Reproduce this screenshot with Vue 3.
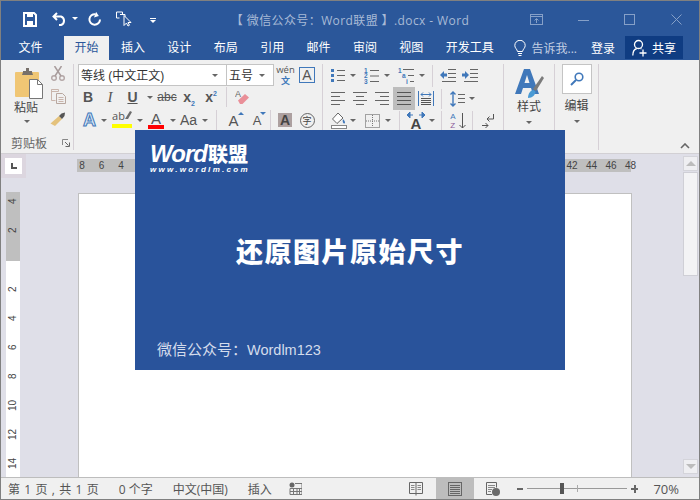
<template>
  <div class="window">
    <!-- title bar -->
    <header class="titlebar">
      <div class="quick">
        <svg class="q-save" width="14" height="15" viewBox="0 0 14 15"><path d="M1 1h10l2 2v11H1z" fill="none" stroke="#fff" stroke-width="2"/><rect x="4" y="1" width="6" height="4" fill="#fff"/><rect x="4" y="9" width="6" height="5" fill="#fff"/></svg>
        <svg class="q-undo" width="15" height="14" viewBox="0 0 15 14"><path d="M5 1 1.500 4.500 5 8M2 4.500h7a4.500 4.500 0 0 1 0 8.500H7" fill="none" stroke="#fff" stroke-width="2"/></svg>
        <i class="caret white q-caret"></i>
        <svg class="q-redo" width="13" height="14" viewBox="0 0 13 14"><path d="M7.500 2.200A5.300 5.300 0 1 0 12 7.500" fill="none" stroke="#fff" stroke-width="2"/><path d="M7 0v6l4-3z" fill="#fff" transform="rotate(20 8 3)"/></svg>
        <svg class="q-touch" width="16" height="16" viewBox="0 0 16 16"><path d="M.5 1h6v2M.5 1v6h3" fill="none" stroke="#fff"/><path d="M4 3.500h5V8" fill="none" stroke="#fff"/><path d="M8 4.500v10l2.500-2.500 1.500 3 1.500-.8-1.500-2.700h3z" fill="#2b579a" stroke="#fff"/></svg>
        <span class="q-more"><b></b><i class="caret white"></i></span>
      </div>
      <div class="doc-title">【 微信公众号：Word联盟 】.docx - Word</div>
      <div class="controls">
        <svg width="13" height="11" viewBox="0 0 13 11"><rect x=".5" y=".5" width="12" height="10" fill="none" stroke="#86a0c8"/><path d="M.5 2.500h12M6.500 9V5M4.500 6.500l2-2 2 2" fill="none" stroke="#86a0c8"/></svg>
        <svg class="c-min" width="11" height="11" viewBox="0 0 11 11"><path d="M0 6.500h11" stroke="#86a0c8"/></svg>
        <svg class="c-max" width="11" height="11" viewBox="0 0 11 11"><rect x=".5" y=".5" width="10" height="10" fill="none" stroke="#86a0c8"/></svg>
        <svg class="c-close" width="11" height="11" viewBox="0 0 11 11"><path d="M.5.500l10 10M10.500.500l-10 10" stroke="#86a0c8"/></svg>
      </div>
    </header>

    <!-- tabs -->
    <nav class="tabs">
      <span class="tab file">文件</span>
      <span v-for="t in tabs" :key="t" class="tab" :class="{ active: t === '开始' }">{{ t }}</span>
      <div class="tabs-right">
        <svg width="12" height="17" viewBox="0 0 12 17"><path d="M3.500 11.500C3 9 .8 8 .8 5.500a5.200 5.200 0 0 1 10.400 0c0 2.500-2.200 3.500-2.700 6z" fill="none" stroke="#fff"/><path d="M4 13.500h4M4.500 15.500h3" stroke="#fff"/></svg>
        <span class="tell">告诉我...</span>
        <span class="login">登录</span>
        <span class="share">
          <svg width="15" height="18" viewBox="0 0 15 18"><circle cx="6.500" cy="5.500" r="4" fill="none" stroke="#fff" stroke-width="1.300"/><path d="M.8 16.500c0-4 2-6.500 4-7M8.500 9.500l1 .5" fill="none" stroke="#fff" stroke-width="1.300"/><path d="M11 10.500v7M7.500 14h7" stroke="#fff" stroke-width="1.300"/></svg>
          共享
        </span>
      </div>
    </nav>

    <!-- ribbon -->
    <section class="ribbon">
      <div class="group clip">
        <div class="clip-body">
          <div class="paste">
            <svg width="28" height="31" viewBox="0 0 28 31"><rect x="0" y="4" width="24" height="25" rx="1" fill="#f0c674"/><path d="M8 4V3h3V0h3v3h3v1l1 3H7z" fill="#77706a"/><path d="M14.500 11.500h8l5 5v14h-13z" fill="#fff" stroke="#777"/><path d="M22.500 11.500v5h5" fill="none" stroke="#777"/></svg>
            <span class="big-label">粘贴</span>
            <i class="caret"></i>
          </div>
          <div class="clip-tools">
            <svg width="14" height="15" viewBox="0 0 14 15"><circle cx="3" cy="12" r="2.300" fill="none" stroke="#b3a6a6" stroke-width="1.400"/><circle cx="11" cy="12" r="2.300" fill="none" stroke="#b3a6a6" stroke-width="1.400"/><path d="M4 10 10.500 0M10 10 3.500 0" stroke="#a89c9c" stroke-width="1.500"/></svg>
            <svg width="15" height="15" viewBox="0 0 15 15"><path d="M.5.500h7v2h-7zM.5.500v11h4" fill="none" stroke="#c9b5ac"/><path d="M5.500 4.500h6l3 3v7h-9z" fill="none" stroke="#b8a79f"/><path d="M7.500 8.500h5M7.500 10.500h5M7.500 12.500h5" stroke="#c9b5ac"/></svg>
            <svg width="16" height="15" viewBox="0 0 16 15"><path d="M9 4 12 7 5 14 .5 11.500z" fill="#e4c27c"/><path d="M9 4 11.500 1.500 15 .5 14.500 4 12 7z" fill="#555"/></svg>
          </div>
        </div>
        <div class="group-label">
          <span>剪贴板</span>
          <svg width="8" height="8" viewBox="0 0 8 8"><path d="M.5 6V.5H6" fill="none" stroke="#888"/><path d="M3 3l3.500 3.500M7.500 3.500v4h-4" fill="none" stroke="#666"/></svg>
        </div>
      </div>

      <div class="group font">
        <div class="row font-r1">
          <div class="combo"><span>等线 (中文正文)</span><i class="caret"></i></div>
          <div class="combo size"><span>五号</span><i class="caret"></i></div>
          <div class="pinyin"><span>wén</span><em>文</em></div>
          <div class="a-box">A</div>
        </div>
        <div class="row font-r2">
          <b class="glyph">B</b>
          <span class="glyph italic">I</span>
          <b class="glyph under">U</b>
          <i class="caret"></i>
          <s class="glyph abc">abc</s>
          <b class="glyph">x<sub>2</sub></b>
          <b class="glyph">x<sup>2</sup></b>
          <i class="vsep"></i>
          <svg width="15" height="16" viewBox="0 0 15 16"><text x="0" y="8" font-size="9" fill="#666" font-family="Liberation Sans">A</text><path d="M3 11.500 10 5l4 3.500-6.500 6.500H5z" fill="#e98f98"/></svg>
        </div>
        <div class="row font-r3">
          <span class="a-effect">A</span>
          <i class="caret"></i>
          <span class="a-mark"><span>ab</span><svg width="8" height="10" viewBox="0 0 8 10"><path d="M1 9 6 1l2 1-4 7z" fill="#6d6d6d"/></svg><u class="yellow"></u></span>
          <i class="caret"></i>
          <span class="a-color">A<u class="red"></u></span>
          <i class="caret"></i>
          <span class="aa">Aa</span>
          <i class="caret"></i>
          <i class="vsep end"></i>
          <span class="a-grow">A<i class="up"></i></span>
          <span class="a-grow small">A<i class="down"></i></span>
          <i class="vsep"></i>
          <span class="a-shade">A</span>
          <span class="a-circle">字</span>
        </div>
      </div>

      <div class="group para">
        <div class="row para-r1 inset">
          <svg width="14" height="15" viewBox="0 0 14 15"><path d="M0 1h3v3H0zM0 6h3v3H0zM0 11h3v3H0z" fill="#4078ba"/><path d="M6 2.500h8M6 7.500h8M6 12.500h8" stroke="#666"/></svg>
          <i class="caret"></i>
          <svg width="15" height="17" viewBox="0 0 15 17"><g fill="#4078ba" font-size="6.500" font-weight="bold" font-family="Liberation Sans"><text x="0" y="5.500">1</text><text x="0" y="11">2</text><text x="0" y="16.500">3</text></g><path d="M6 3.500h9M6 9h9M6 14.500h9" stroke="#666"/></svg>
          <i class="caret"></i>
          <svg width="16" height="17" viewBox="0 0 16 17"><g fill="#4078ba" font-size="6.500" font-weight="bold" font-family="Liberation Sans"><text x="0" y="5.500">1</text><text x="4" y="11">a</text><text x="8" y="16.500">i</text></g><path d="M5 2.500h11M10 8.500h6M12 14.500h4" stroke="#666"/></svg>
          <i class="caret"></i>
          <i class="vsep tall"></i>
          <svg width="16" height="13" viewBox="0 0 16 13"><path d="M8 .5h8M8 4.500h8M8 8.500h8M2 12.500h14" stroke="#666"/><path d="M0 6l4-4v2.500h3v3H4V10z" fill="#4078ba"/></svg>
          <svg width="16" height="13" viewBox="0 0 16 13"><path d="M8 .5h8M8 4.500h8M8 8.500h8M2 12.500h14" stroke="#666"/><path d="M7 6 3 2v2.500H0v3h3V10z" fill="#4078ba"/></svg>
        </div>
        <div class="row para-r2">
          <svg width="14" height="13" viewBox="0 0 14 13"><path d="M0 .5h14M0 4.500h9M0 8.500h14M0 12.500h9" stroke="#666"/></svg>
          <svg width="14" height="13" viewBox="0 0 14 13"><path d="M0 .5h14M3 4.500h8M0 8.500h14M3 12.500h8" stroke="#666"/></svg>
          <svg width="14" height="13" viewBox="0 0 14 13"><path d="M0 .5h14M5 4.500h9M0 8.500h14M5 12.500h9" stroke="#666"/></svg>
          <span class="active-tool"><svg width="14" height="13" viewBox="0 0 14 13"><path d="M0 .5h14M0 4.500h14M0 8.500h14M0 12.500h14" stroke="#555"/></svg></span>
          <svg width="16" height="15" viewBox="0 0 16 15"><path d="M.5 0v15M15.500 0v15" stroke="#4078ba"/><path d="M3 3.500h10M3 3.500l2-2M3 3.500l2 2M13 3.500l-2-2M13 3.500l-2 2" fill="none" stroke="#4078ba"/><path d="M3 7.500h10M3 9.500h10M3 11.500h10M3 13.500h10" stroke="#555"/></svg>
          <i class="vsep"></i>
          <svg width="15" height="16" viewBox="0 0 15 16"><path d="M3 1v14M.5 3.500 3 1l2.500 2.500M.5 12.500 3 15l2.500-2.500" fill="none" stroke="#4078ba" stroke-width="1.400"/><path d="M8 3.500h7M8 7.500h7M8 11.500h7" stroke="#666"/></svg>
          <i class="caret"></i>
        </div>
        <div class="row para-r3 inset">
          <svg width="16" height="17" viewBox="0 0 16 17"><path d="M7 1 1.500 7 6 11.500l6-5.500z" fill="#fff" stroke="#666"/><path d="M12 7c2 2 2.500 4 1.500 4.500S11 10 12 7z" fill="#4078ba"/><rect x=".5" y="13.500" width="15" height="3" fill="#fff" stroke="#888"/></svg>
          <i class="caret"></i>
          <svg width="15" height="14" viewBox="0 0 15 14"><rect x=".5" y=".5" width="14" height="13" fill="none" stroke="#555" stroke-dasharray="1 1"/><path d="M7.500 1v12M1 7h13" stroke="#777" stroke-dasharray="1 1"/></svg>
          <i class="caret"></i>
          <i class="vsep"></i>
          <span class="text-dir"><svg width="18" height="6" viewBox="0 0 18 6"><path d="M0 3l3-3v6zM18 3l-3-3v6zM3 3h3M12 3h3" fill="#4078ba" stroke="#4078ba"/></svg><span>A</span></span>
          <i class="caret"></i>
          <i class="vsep"></i>
          <span class="sort"><span class="az"><em>A</em><strong>Z</strong></span><svg width="7" height="16" viewBox="0 0 7 16"><path d="M3.500 0v15M.5 12l3 3 3-3" fill="none" stroke="#555"/></svg></span>
          <i class="vsep"></i>
          <svg width="12" height="16" viewBox="0 0 12 16"><path d="M11.500 1v5H5M5 6l2.500-2.500M5 6l2.500 2.500" fill="none" stroke="#555"/><path d="M0 12.500h6" stroke="#555"/><path d="M3.500 10 6 12.500 3.500 15" fill="none" stroke="#555"/></svg>
        </div>
      </div>

      <div class="group big">
        <svg width="29" height="31" viewBox="0 0 29 31"><path d="M0 26 9 1h6l9 25h-6l-2-6H8l-2 6zM9.500 15h5L12 7z" fill="#4078ba"/><path d="M18 21 27 8l2 2-8 13z" fill="#7b7b7b"/><path d="M13 30c0-5 3-8 5.500-8l2 1.500c0 3-3 6.500-7.500 6.500z" fill="#4a9ad4"/></svg>
        <span class="big-label">样式</span>
        <i class="caret"></i>
      </div>

      <div class="group big edit">
        <span class="find">
          <svg width="14" height="14" viewBox="0 0 14 14"><circle cx="9" cy="5" r="3.800" fill="none" stroke="#4078ba" stroke-width="1.600"/><path d="M6 8 1 13" stroke="#4078ba" stroke-width="2"/></svg>
        </span>
        <span class="big-label">编辑</span>
        <i class="caret"></i>
      </div>

      <svg class="collapse" width="10" height="6" viewBox="0 0 10 6"><path d="M1 5l4-4 4 4" fill="none" stroke="#666" stroke-width="1.600"/></svg>
    </section>

    <!-- document area -->
    <main class="workspace">
      <div class="rail">
        <div class="corner"><span><svg width="6" height="6" viewBox="0 0 6 6"><path d="M0 0h2v4h4v2H0z" fill="#555"/></svg></span></div>
        <div class="v-ruler">
          <div class="v-grey"><span>4</span><span>2</span></div>
          <div class="v-white"><span v-for="n in vNums" :key="n">{{ n }}</span></div>
        </div>
      </div>
      <div class="center">
        <div class="h-ruler">
          <div class="h-nums"><span>8</span><span>6</span><span>4</span></div>
          <div class="h-nums right"><span>42</span><span>44</span><span>46</span><span>48</span></div>
        </div>
        <div class="page"></div>
      </div>
      <aside class="scrollbar">
        <div class="sb-btn"><i class="tri up"></i></div>
        <div class="sb-thumb"></div>
        <div class="sb-btn bottom"><i class="tri"></i></div>
      </aside>
    </main>

    <!-- status bar -->
    <footer class="statusbar">
      <span class="pages">第 1 页 , 共 1 页</span>
      <span>0 个字</span>
      <span>中文(中国)</span>
      <span>插入</span>
      <svg class="macro" width="13" height="13" viewBox="0 0 13 13"><circle cx="3" cy="3" r="2.500" fill="#666"/><path d="M6 1.500h7v11H1V6.500h12M1 9.500h12M4.500 6.500v6M8 6.500v6M10.500 6.500v6" fill="none" stroke="#777"/></svg>
      <div class="status-right">
        <svg width="14" height="14" viewBox="0 0 14 14"><path d="M.5.500h13v11h-13zM7 .5v13" fill="none" stroke="#666"/><path d="M2 3.500h3.500M2 5.500h3.500M2 7.500h3.500M8.500 3.500H12M8.500 5.500H12M8.500 7.500H12" stroke="#888"/></svg>
        <span class="view-active"><svg width="14" height="14" viewBox="0 0 14 14"><rect x=".5" y=".5" width="13" height="13" fill="none" stroke="#666"/><path d="M2 3.500h10M2 5.500h10M2 7.500h10M2 9.500h10M2 11.500h10" stroke="#666"/></svg></span>
        <svg class="view-web" width="14" height="14" viewBox="0 0 14 14"><path d="M6 12.500H.5V.5h10v5" fill="none" stroke="#666"/><path d="M2 3.500h7M2 5.500h7M2 7.500h4M2 9.500h3" stroke="#888"/><circle cx="10" cy="10" r="4" fill="#6b6b6b"/></svg>
        <span class="zoom-minus"></span>
        <div class="slider"><i class="tick"></i><i class="thumb"></i></div>
        <span class="zoom-plus"></span>
        <span class="zoom-val">70%</span>
      </div>
    </footer>

    <!-- article banner sits over the window -->
    <div class="banner">
      <div class="logo">
        <div class="logo-name"><em>Word</em><b>联盟</b></div>
        <div class="logo-url">www.wordlm.com</div>
      </div>
      <h1>还原图片原始尺寸</h1>
      <p>微信公众号：<span>Wordlm123</span></p>
    </div>
  </div>
</template>

<script setup>
const tabs = ['开始', '插入', '设计', '布局', '引用', '邮件', '审阅', '视图', '开发工具']
const vNums = [2, 4, 6, 8, 10, 12, 14]
</script>

<style>
html, body { margin: 0; overflow: hidden; }
</style>

<style scoped>
.window {
  position: relative;
  width: 700px;
  height: 500px;
  box-sizing: border-box;
  border: 1px solid #808080;
  background: #f0f0f0;
  font-family: "Open Sans", "Noto Sans CJK SC", sans-serif;
  font-size: 12px;
  color: #444;
  overflow: hidden;
  display: flex;
  flex-direction: column;
}

.caret {
  display: block;
  width: 0;
  height: 0;
  border-left: 3px solid transparent;
  border-right: 3px solid transparent;
  border-top: 3px solid #666;
}
.caret.white { border-top-color: #fff; }

/* title bar */
.titlebar {
  height: 35px;
  flex: none;
  background: #2b579a;
  display: grid;
  grid-template-columns: 1fr auto 1fr;
  align-items: center;
}
.quick { display: flex; align-items: center; padding-left: 22px; }
.q-save { margin-top: 1px; }
.q-undo { margin-left: 15px; }
.q-caret { margin-left: 5px; }
.q-redo { margin-left: 10px; }
.q-touch { margin-left: 15px; }
.q-more { margin-left: 18px; display: flex; flex-direction: column; gap: 1px; margin-top: 3px; }
.q-more b { display: block; width: 6px; height: 1px; background: #fff; }
.doc-title { color: #a8bad6; font-size: 12px; letter-spacing: .4px; padding-top: 2px; }
.controls { display: flex; align-items: center; justify-content: flex-end; padding-right: 17px; padding-top: 1px; }
.c-min { margin-left: 35px; }
.c-max { margin-left: 35px; }
.c-close { margin-left: 36px; }

/* tabs */
.tabs {
  height: 24px;
  flex: none;
  background: #2b579a;
  display: flex;
  align-items: stretch;
  color: #fff;
  gap: 1.400px;
}
.tab { padding: 0 10.500px; line-height: 24px; }
.tab.file { margin-left: 7px; margin-right: 9.600px; }
.tab.active { background: #f0f0f0; color: #2b579a; }
.tabs-right { margin-left: auto; display: flex; align-items: center; padding-right: 16px; }
.tabs-right > svg { margin-left: -1px; margin-right: 1px; }
.tell { color: #c3cfe3; margin-left: 5px; }
.login { margin-left: 14px; }
.share {
  margin-left: 10px;
  height: 23px;
  align-self: flex-start;
  width: 58px;
  box-sizing: border-box;
  padding-left: 7px;
  background: #0f3c82;
  display: flex;
  align-items: center;
  gap: 5px;
}

/* ribbon */
.ribbon {
  position: relative;
  height: 93px;
  flex: none;
  display: flex;
  align-items: flex-start;
  box-sizing: content-box;
  border-bottom: 1px solid #d2d0d4;
  background: #f0f0f0;
}
.group {
  height: 86px;
  margin-top: 4px;
  box-sizing: border-box;
  border-right: 1px solid #d6d0d6;
  flex: none;
}
.big-label { font-size: 12px; color: #444; line-height: 14px; }

.clip { width: 73px; display: flex; flex-direction: column; }
.clip-body { display: flex; height: 72px; }
.paste { width: 49px; display: flex; flex-direction: column; align-items: center; padding: 4px 0 0 6px; box-sizing: border-box; }
.paste .big-label { margin-top: 2px; margin-right: 5px; }
.paste .caret { margin-top: 5px; margin-right: 3px; }
.clip-tools { display: flex; flex-direction: column; align-items: center; gap: 8px; padding-top: 2px; width: 16px; }
.group-label { display: flex; align-items: center; justify-content: space-between; padding: 0 3px 0 10px; height: 14px; color: #666; }

.row { display: grid; place-items: center; }
.font { width: 249px; padding-left: 4px; }
.font-r1 { height: 23px; grid-template-columns: 149px 47px 23px 20px; align-items: start; }
.font-r2 { height: 22px; margin-top: -1px; grid-template-columns: 20px 24px 21px 13px 22px 22px 22px 9px 22px; }
.font-r3 { height: 22px; margin-top: 1px; grid-template-columns: 23px 6px 30px 5px 28px 5px 27px 5px 10px 33px 14px 12px 18px 26px; }

.combo {
  justify-self: stretch;
  height: 22px;
  box-sizing: border-box;
  background: #fff;
  border: 1px solid #c4c4c4;
  display: flex;
  align-items: center;
  justify-content: space-between;
  padding: 0 8px 1px 2px;
  font-family: "Liberation Sans", "Noto Sans CJK SC", sans-serif;
  font-size: 12px;
  color: #333;
}
.combo.size { border-left: none; padding-left: 2px; }
.combo .caret { margin-top: 1px; }
.pinyin { display: flex; flex-direction: column; align-items: center; font-size: 9.500px; color: #555; }
.pinyin span { line-height: 11px; }
.pinyin em { font-style: normal; line-height: 11px; font-size: 9px; color: #4078ba; font-weight: bold; }
.a-box {
  width: 16px; height: 16px; box-sizing: border-box;
  border: 1px solid #4078ba; margin-top: 3px;
  font-family: "Liberation Sans", sans-serif; font-size: 14px; line-height: 14px;
  text-align: center; color: #555;
}

.glyph { font-family: "Liberation Sans", sans-serif; font-size: 14px; color: #555; line-height: 16px; }
.glyph.italic { font-family: "Liberation Serif", serif; font-style: italic; font-size: 15px; }
.glyph.under { text-decoration: underline; }
.glyph.abc { font-size: 12px; }
.glyph sub, .glyph sup { font-size: 7px; color: #4078ba; line-height: 0; }

.vsep { display: block; width: 1px; height: 20px; background: #d6d0d6; }
.vsep.end { justify-self: end; }
.vsep.tall { height: 22px; }

.a-effect {
  font-family: "Liberation Sans", sans-serif; font-weight: bold; font-size: 18px; line-height: 18px;
  color: #dce8f5; -webkit-text-stroke: 1px #3f78ba;
}
.a-mark { position: relative; display: flex; align-items: flex-start; height: 18px; font-size: 11px; line-height: 10px; color: #555; }
.a-mark svg { margin-left: -1px; margin-top: -1px; }
.a-mark u { position: absolute; left: 0; right: 0; bottom: 1px; height: 4px; }
.yellow { background: #ffff00; }
.red { background: #ff0000; }
.a-color { position: relative; display: block; width: 16px; height: 17px; text-align: center; font-family: "Liberation Sans", sans-serif; font-size: 15px; line-height: 14px; color: #555; }
.a-color u { position: absolute; left: 0; right: 0; bottom: 0; height: 4px; }
.aa { font-family: "Liberation Sans", sans-serif; font-size: 14px; color: #555; }
.a-grow { position: relative; font-family: "Liberation Sans", sans-serif; font-size: 15px; line-height: 15px; color: #555; padding-top: 1px; }
.a-grow.small { font-size: 13px; }
.a-grow i { position: absolute; right: -5px; top: 0; width: 0; height: 0; border-left: 3px solid transparent; border-right: 3px solid transparent; }
.a-grow .up { border-bottom: 3px solid #4078ba; }
.a-grow .down { border-top: 3px solid #4078ba; }
.a-shade { width: 14px; height: 14px; background: #ada0a0; color: #444; font-family: "Liberation Sans", sans-serif; font-weight: bold; font-size: 14px; line-height: 14px; text-align: center; }
.a-circle { width: 15px; height: 15px; box-sizing: border-box; border: 1px solid #666; border-radius: 50%; font-size: 9px; line-height: 13px; text-align: center; color: #444; }

.para { width: 181px; padding-left: 4px; }
.inset { margin-left: 4px; }
.para-r1 { height: 23px; grid-template-columns: 14px 16px 21px 10px 28px 4px 16px 16px 28px; }
.para-r2 { height: 23px; grid-template-columns: 22px 22px 22px 22px 22px 8px 25px 4px; }
.para-r3 { height: 21px; grid-template-columns: 15px 14px 25px 5px 18px 16px 15px 5px 28px 1px 30px; }
.active-tool { width: 22px; height: 23px; background: #bdbdbd; display: flex; align-items: center; justify-content: center; }
.text-dir { display: flex; flex-direction: column; align-items: center; font-family: "Liberation Sans", sans-serif; font-weight: bold; font-size: 15px; line-height: 12px; color: #444; }
.sort { display: flex; align-items: center; gap: 3px; }
.az { display: flex; flex-direction: column; font-family: "Liberation Sans", sans-serif; font-size: 8px; line-height: 9px; }
.az em { font-style: normal; color: #4078ba; }
.az strong { font-weight: normal; color: #8a5a9a; }

.big { display: flex; flex-direction: column; align-items: center; }
.big > svg { margin-top: 4px; }
.big { width: 51px; }
.big .big-label { margin-top: 1px; }
.big .caret { margin-top: 7px; }
.edit { width: 44px; }
.find {
  width: 30px; height: 30px; box-sizing: border-box;
  background: #fff; border: 1px solid #c4c4c4;
  display: flex; align-items: center; justify-content: center;
}
.edit .big-label { margin-top: 5px; }
.collapse { position: absolute; right: 9px; top: 83px; }

/* workspace */
.workspace {
  flex: 1;
  min-height: 0;
  display: flex;
  background: #dfdfe8;
}
.rail { width: 77px; flex: none; }
.corner { width: 25px; height: 24px; background: #dcd6df; box-sizing: border-box; padding: 4px 4px 4px 4px; }
.corner span { display: flex; width: 17px; height: 16px; background: #fff; align-items: center; justify-content: center; }
.v-ruler { margin: 14px 0 0 5px; width: 14px; font-family: "Liberation Sans", sans-serif; font-size: 10px; color: #444; }
.v-ruler span { display: block; height: 18px; line-height: 14px; writing-mode: vertical-rl; transform: rotate(180deg); text-align: center; margin-bottom: 11px; }
.v-grey { height: 69px; background: #bfbfbf; overflow: hidden; }
.v-white { height: 216px; background: #fff; padding-top: 19px; box-sizing: border-box; overflow: hidden; }

.center { width: 554px; flex: none; }
.h-ruler {
  height: 13px; margin: 5px 1px 0 -1px;
  background: #bfbfbf;
  display: flex; justify-content: space-between;
  font-family: "Liberation Sans", sans-serif; font-size: 10px; line-height: 13px; color: #444;
}
.h-nums { display: flex; gap: 9.500px; }
.h-nums span { width: 10px; text-align: center; }
.h-nums.right { margin-right: -4px; }
.page {
  margin-top: 21px;
  height: 284px;
  background: #fff;
  border: 1px solid #c0c0c0;
  border-bottom: none;
  box-sizing: border-box;
}
.scrollbar { margin-left: auto; width: 15px; margin-right: 1px; padding-top: 2px; display: flex; flex-direction: column; height: 321px; box-sizing: border-box; }
.sb-btn { height: 15px; flex: none; background: #efeff2; border: 1px solid #d4d4da; box-sizing: border-box; display: flex; align-items: center; justify-content: center; }
.sb-btn.bottom { margin-top: auto; margin-bottom: 1px; }
.sb-thumb { height: 104px; margin-top: 1px; background: #f3f3f5; border: 1px solid #cfcfd6; box-sizing: border-box; }
.tri { width: 0; height: 0; border-left: 5px solid transparent; border-right: 5px solid transparent; border-top: 5px solid #bcbcbc; }
.tri.up { border-top: none; border-bottom: 5px solid #bcbcbc; }

/* status bar */
.statusbar {
  height: 22px;
  flex: none;
  box-sizing: border-box;
  border-top: 1px solid #bdbdbd;
  background: #f0f0f0;
  display: flex;
  align-items: center;
  gap: 20px;
  padding-left: 7px;
  color: #555;
}
.pages { word-spacing: 1.200px; }
.macro { margin-left: -3px; }
.status-right { margin-left: auto; display: flex; align-items: center; height: 100%; }
.view-active { width: 38px; height: 100%; background: #bdbdbd; margin-left: 13px; display: flex; align-items: center; justify-content: center; }
.view-web { margin-left: 12px; }
.zoom-minus { width: 6px; height: 2px; background: #666; margin-left: 17px; }
.slider { position: relative; width: 100px; height: 1px; background: #999; margin-left: 4px; }
.thumb { position: absolute; left: 33px; top: -5px; width: 4px; height: 11px; background: #555; }
.tick { position: absolute; left: 50px; top: -3px; width: 1px; height: 7px; background: #aaa; }
.zoom-plus { position: relative; width: 7px; height: 2px; background: #666; margin-left: 4px; }
.zoom-plus::after { content: ""; position: absolute; left: 2.500px; top: -3px; width: 2px; height: 8px; background: #666; }
.zoom-val { margin-left: 15px; margin-right: 20px; font-size: 13px; }

/* banner */
.banner {
  position: absolute;
  left: 134px;
  top: 129px;
  width: 430px;
  height: 240px;
  box-sizing: border-box;
  background: #29539b;
  color: #fff;
  padding: 12px 0 0 15px;
  display: flex;
  flex-direction: column;
}
.logo-name { display: flex; align-items: baseline; line-height: 24px; height: 24px; }
.logo-name em { font-family: "Liberation Sans", sans-serif; font-weight: bold; font-size: 24px; font-style: italic; letter-spacing: -1px; }
.logo-name b { font-family: "Noto Sans CJK SC", sans-serif; font-size: 20px; font-weight: 900; margin-left: 1px; }
.logo-url { font-family: "Liberation Sans", sans-serif; font-weight: bold; font-style: italic; font-size: 8px; line-height: 10px; letter-spacing: 2.300px; margin-top: -1px; }
h1 {
  margin: 58px 0 0 -15px;
  text-align: center;
  font-family: "Noto Sans CJK SC", sans-serif;
  font-size: 27px;
  line-height: 36px;
  font-weight: 900;
  letter-spacing: 1.500px;
}
p {
  margin: 70px 0 0 7px;
  font-family: "Noto Sans CJK SC", sans-serif;
  font-size: 15px;
  line-height: 20px;
  color: #d4dcec;
}
p span { font-family: "Liberation Sans", sans-serif; font-size: 14.500px; }
</style>
